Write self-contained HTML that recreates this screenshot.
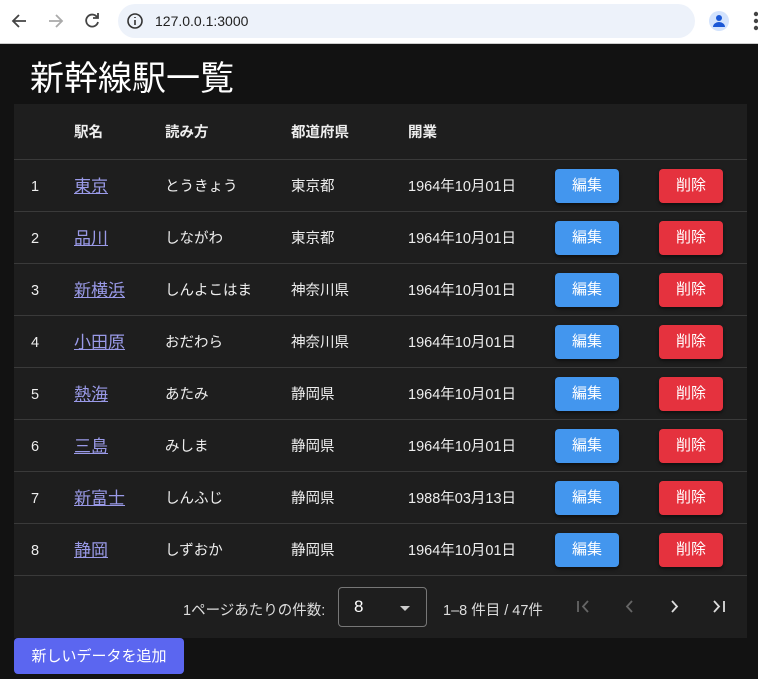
<!DOCTYPE html>
<html><head><meta charset="utf-8"><style>
*{box-sizing:border-box;margin:0;padding:0}
body{width:758px;height:679px;overflow:hidden;background:#121212;font-family:"Liberation Sans","Noto Sans CJK JP",sans-serif;color:#fff;position:relative}
.chrome{position:absolute;left:0;top:0;width:758px;height:44px;background:#fff;border-bottom:1px solid #ccc}
.url{position:absolute;left:118px;top:4px;width:577px;height:34px;border-radius:17px;background:#edf2fa}
.url span{position:absolute;left:37px;top:9px;font-size:14px;color:#222}
h1{position:absolute;left:30px;top:51px;font-size:34px;font-weight:400;font-family:"Noto Sans CJK JP",sans-serif}
.paper{position:absolute;left:14px;top:104px;width:733px;height:534px;background:#1e1e1e}
.row{position:absolute;left:0;width:733px;height:52px;border-bottom:1px solid #3a3a3a;font-size:14.5px;color:#eee}
.row div{position:absolute;top:1px;line-height:52px;white-space:nowrap}
.hd{height:56px}.hd div{line-height:56px;font-weight:bold}
a{color:#9a9ae8;text-decoration:underline;font-size:17px}
.row .b{top:9px;width:64px;height:34px;border-radius:4px;font-size:15px;text-align:center;line-height:34px;box-shadow:0 2px 3px rgba(0,0,0,.5);color:#fff}
.row .e{left:541px;background:#4396ee}.row .d{left:645px;background:#e5323e}
.pg{position:absolute;top:471px;left:0;width:733px;height:63px;font-size:14.5px;color:#ddd}
.sel{position:absolute;left:324px;top:12px;width:89px;height:40px;border:1px solid #777;border-radius:4px}
.add{position:absolute;left:14px;top:638px;width:170px;height:36px;background:#5b66f0;border-radius:4px;font-size:15px;text-align:center;line-height:37px}
</style></head><body>
<div class="chrome">
<svg width="758" height="44" style="position:absolute;left:0;top:0" fill="none" stroke="#444" stroke-width="1.8">
<path d="M26 21H13M19 15l-6 6 6 6"/><path d="M49 21h13M56 15l6 6-6 6" stroke="#aaa"/>
<path d="M97 17a6 6 0 1 0 1 5M98 13v5h-5"/>
<circle cx="719" cy="21" r="10" fill="#d3e3fd" stroke="none"/><circle cx="719" cy="18" r="3" fill="#1a57d6" stroke="none"/><path d="M713 27a6 5 0 0 1 12 0z" fill="#1a57d6" stroke="none"/>
<path d="M670 13l2.5 5.5 6 .5-4.5 4 1.3 6-5.3-3.2-5.3 3.2 1.3-6-4.5-4 6-.5z" stroke-width="1.4"/>
<rect x="630" y="13" width="14" height="15" rx="2" stroke-width="1.4"/>
<circle cx="756" cy="14" r="1.3" fill="#444"/><circle cx="756" cy="21" r="1.3" fill="#444"/><circle cx="756" cy="28" r="1.3" fill="#444"/>
</svg>
<div class="url"><svg width="20" height="20" style="position:absolute;left:7px;top:7px"><circle cx="10" cy="10" r="7" fill="none" stroke="#333" stroke-width="1.6"/><path d="M10 9v5M10 6v1" stroke="#333" stroke-width="1.6"/></svg><span>127.0.0.1:3000</span></div>
</div>
<h1>新幹線駅一覧</h1>
<div class="paper">
<div class="row hd" style="top:0"><div style="left:60px">駅名</div><div style="left:151px">読み方</div><div style="left:277px">都道府県</div><div style="left:394px">開業</div></div>
<div class="row" style="top:56px"><div style="left:17px">1</div><div style="left:60px"><a>東京</a></div><div style="left:151px">とうきょう</div><div style="left:277px">東京都</div><div style="left:394px">1964年10月01日</div><div class="b e">編集</div><div class="b d">削除</div></div>
<div class="row" style="top:108px"><div style="left:17px">2</div><div style="left:60px"><a>品川</a></div><div style="left:151px">しながわ</div><div style="left:277px">東京都</div><div style="left:394px">1964年10月01日</div><div class="b e">編集</div><div class="b d">削除</div></div>
<div class="row" style="top:160px"><div style="left:17px">3</div><div style="left:60px"><a>新横浜</a></div><div style="left:151px">しんよこはま</div><div style="left:277px">神奈川県</div><div style="left:394px">1964年10月01日</div><div class="b e">編集</div><div class="b d">削除</div></div>
<div class="row" style="top:212px"><div style="left:17px">4</div><div style="left:60px"><a>小田原</a></div><div style="left:151px">おだわら</div><div style="left:277px">神奈川県</div><div style="left:394px">1964年10月01日</div><div class="b e">編集</div><div class="b d">削除</div></div>
<div class="row" style="top:264px"><div style="left:17px">5</div><div style="left:60px"><a>熱海</a></div><div style="left:151px">あたみ</div><div style="left:277px">静岡県</div><div style="left:394px">1964年10月01日</div><div class="b e">編集</div><div class="b d">削除</div></div>
<div class="row" style="top:316px"><div style="left:17px">6</div><div style="left:60px"><a>三島</a></div><div style="left:151px">みしま</div><div style="left:277px">静岡県</div><div style="left:394px">1964年10月01日</div><div class="b e">編集</div><div class="b d">削除</div></div>
<div class="row" style="top:368px"><div style="left:17px">7</div><div style="left:60px"><a>新富士</a></div><div style="left:151px">しんふじ</div><div style="left:277px">静岡県</div><div style="left:394px">1988年03月13日</div><div class="b e">編集</div><div class="b d">削除</div></div>
<div class="row" style="top:420px"><div style="left:17px">8</div><div style="left:60px"><a>静岡</a></div><div style="left:151px">しずおか</div><div style="left:277px">静岡県</div><div style="left:394px">1964年10月01日</div><div class="b e">編集</div><div class="b d">削除</div></div>
<div class="pg">
<div style="position:absolute;left:169px;top:24px">1ページあたりの件数:</div>
<div class="sel"><span style="position:absolute;left:15px;top:9px;font-size:17px;color:#fff">8</span><svg width="12" height="8" style="position:absolute;left:60px;top:17px"><path d="M1 1h10L6 6z" fill="#ccc"/></svg></div>
<div style="position:absolute;left:429px;top:24px">1–8 件目 / 47件</div>
<svg width="170" height="63" style="position:absolute;left:555px;top:0" fill="none" stroke-width="1.8">
<path d="M9 26v11M19 26l-5 5.5 5 5.5" stroke="#666"/>
<path d="M63 26l-5 5.5 5 5.5" stroke="#666"/>
<path d="M103 26l5 5.5-5 5.5" stroke="#ddd"/>
<path d="M145 26l5 5.5-5 5.5M155 26v11" stroke="#ddd"/>
</svg>
</div>
</div>
<div class="add">新しいデータを追加</div>
</body></html>
